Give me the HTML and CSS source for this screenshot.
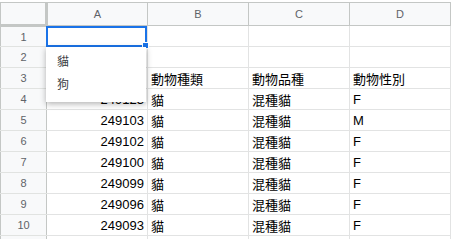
FILE: index.html
```html
<!DOCTYPE html>
<html lang="zh-Hant">
  <head>
    <meta charset="UTF-8" />
    <title>動物資料</title>
    <link rel="stylesheet" href="styles.css">
  </head>
  <body>
    <div class="sheet">
      <table class="grid">
        <colgroup>
          <col class="c-idx" />
          <col class="c-col" />
          <col class="c-col" />
          <col class="c-col" />
          <col class="c-col" />
        </colgroup>
        <thead>
          <tr>
            <th class="corner"></th>
            <th>A</th>
            <th>B</th>
            <th>C</th>
            <th>D</th>
          </tr>
        </thead>
        <tbody>
          <tr><th>1</th><td></td><td></td><td></td><td></td></tr>
          <tr><th>2</th><td></td><td></td><td></td><td></td></tr>
          <tr><th>3</th><td></td><td>動物種類</td><td>動物品種</td><td>動物性別</td></tr>
          <tr><th>4</th><td class="num">249123</td><td>貓</td><td>混種貓</td><td>F</td></tr>
          <tr><th>5</th><td class="num">249103</td><td>貓</td><td>混種貓</td><td>M</td></tr>
          <tr><th>6</th><td class="num">249102</td><td>貓</td><td>混種貓</td><td>F</td></tr>
          <tr><th>7</th><td class="num">249100</td><td>貓</td><td>混種貓</td><td>F</td></tr>
          <tr><th>8</th><td class="num">249099</td><td>貓</td><td>混種貓</td><td>F</td></tr>
          <tr><th>9</th><td class="num">249096</td><td>貓</td><td>混種貓</td><td>F</td></tr>
          <tr><th>10</th><td class="num">249093</td><td>貓</td><td>混種貓</td><td>F</td></tr>
          <tr><th></th><td></td><td></td><td></td><td></td></tr>
        </tbody>
      </table>

      <!-- active cell A1 -->
      <div class="selection"><span class="handle"></span></div>

      <!-- dropdown list for A1 -->
      <ul class="dropdown">
        <li>貓</li>
        <li>狗</li>
      </ul>
    </div>
  </body>
</html>
```

FILE: styles.css
```css
html {
  font-family: "Liberation Sans", "Noto Sans CJK TC", sans-serif;
}

body {
  margin: 0;
  padding-top: 2px;
  background-color: #fff;
  overflow: hidden;
}

.sheet {
  position: relative;
  width: 450px;
}

.grid {
  border-collapse: collapse;
  table-layout: fixed;
  width: 450px;
}

.c-idx {
  width: 46px;
}

.c-col {
  width: 101px;
}

.grid tr {
  height: 21px;
}

.grid thead tr {
  height: 23px;
}

.grid th {
  background-color: #f8f9fa;
  color: #5f6368;
  font-size: 11px;
  font-weight: normal;
  border: 1px solid #c4c7c5;
  padding: 0;
  text-align: center;
}

.grid tbody th {
  border-color: #e1e3e1 #c4c7c5 #e1e3e1 #c4c7c5;
}

.grid th.corner {
  background-color: #f8f9fa;
  border-right: 3px solid #c4c7c5;
  border-bottom: 3px solid #c4c7c5;
}

.grid td {
  border: 1px solid #e2e3e3;
  padding: 0 3px;
  font-size: 13px;
  color: #000;
  white-space: nowrap;
  overflow: hidden;
}

.grid td.num {
  text-align: right;
}

.selection {
  position: absolute;
  left: 46px;
  top: 24px;
  width: 97px;
  height: 17px;
  border: 2px solid #1a73e8;
}

.handle {
  position: absolute;
  right: -4px;
  bottom: -4px;
  width: 5px;
  height: 5px;
  background-color: #1a73e8;
  border: 1px solid #fff;
}

.dropdown {
  position: absolute;
  left: 46px;
  top: 45px;
  width: 100px;
  margin: 0;
  padding: 4px 0 5px;
  list-style: none;
  background-color: #fff;
  box-shadow: 0 2px 6px rgba(0, 0, 0, 0.3);
  font-size: 12px;
  color: #3c4043;
}

.dropdown li {
  height: 23px;
  line-height: 23px;
  padding-left: 11px;
}
```
